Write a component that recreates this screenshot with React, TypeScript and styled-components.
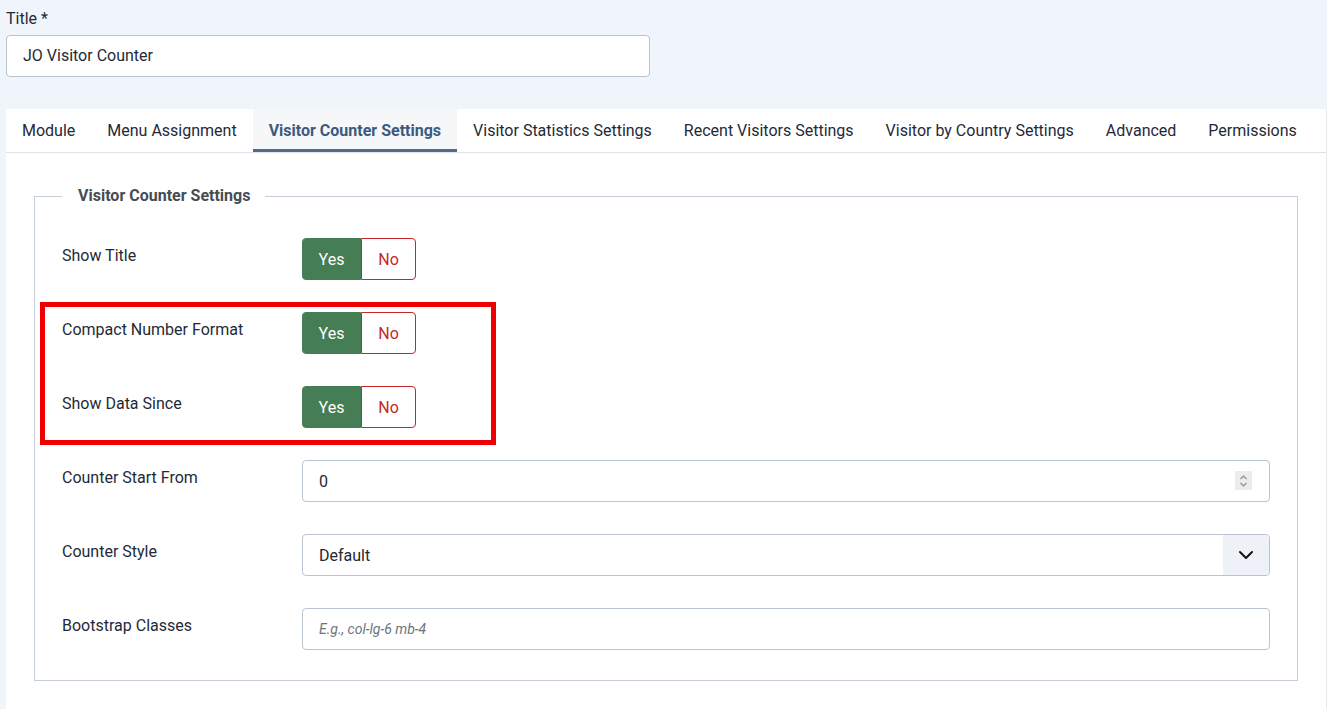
import React from "react";
import styled, { createGlobalStyle } from "styled-components";

const GlobalStyle = createGlobalStyle`
  body {
    margin: 0;
    background: #f0f4fb;
    font-family: Roboto, "Liberation Sans", sans-serif;
    font-size: 16px;
    color: #1f2a38;
  }
`;

const tabs = [
  "Module",
  "Menu Assignment",
  "Visitor Counter Settings",
  "Visitor Statistics Settings",
  "Recent Visitors Settings",
  "Visitor by Country Settings",
  "Advanced",
  "Permissions",
];

const Page = styled.div`
  padding: 9px 0 0 6px;
`;

const TopLabel = styled.label`
  display: block;
  line-height: 20px;
  margin-bottom: 6px;
  color: #1f2a38;
`;

const TextBox = styled.div<{ $width?: string; $lift?: boolean }>`
  box-sizing: border-box;
  width: ${(p) => p.$width || "100%"};
  height: 42px;
  border: 1px solid #b9c4cf;
  border-radius: 4px;
  background: #fff;
  display: flex;
  align-items: center;
  padding: 0 0 ${(p) => (p.$lift ? "1px" : "0")} 16px;
  color: #1f2a38;
  position: relative;
  overflow: hidden;
`;

const Panel = styled.div`
  margin-top: 32px;
  background: #fff;
  border-right: 1px solid #e6eaef;
  min-height: 620px;
`;

const TabBar = styled.div`
  display: flex;
  height: 43px;
  border-bottom: 1px solid #dfe3e8;
`;

const Tab = styled.div<{ $active?: boolean }>`
  padding: 0 16px;
  display: flex;
  align-items: center;
  white-space: nowrap;
  box-sizing: border-box;
  color: ${(p) => (p.$active ? "#3d5a7e" : "#1f2a38")};
  font-weight: ${(p) => (p.$active ? 700 : 400)};
  background: ${(p) => (p.$active ? "#f6f7f9" : "transparent")};
  border-bottom: 3px solid ${(p) => (p.$active ? "#4f6b8e" : "transparent")};
  padding-top: 2px;
`;

const Body = styled.div`
  padding: 31px 28px 20px 28px;
`;

const Fieldset = styled.fieldset`
  margin: 0;
  border: 1px solid #c6ced7;
  padding: 30px 27px 30px 27px;
`;

const Legend = styled.legend`
  padding: 0 15px 0 16px;
  font-weight: 700;
  color: #464c53;
  line-height: 24px;
`;

const Row = styled.div<{ $last?: boolean }>`
  display: flex;
  margin-bottom: ${(p) => (p.$last ? "0" : "32px")};
`;

const Label = styled.div`
  width: 240px;
  flex-shrink: 0;
  padding-top: 6px;
  line-height: 24px;
`;

const Control = styled.div`
  flex: 1;
`;

const Switcher = styled.div`
  display: inline-flex;
  height: 42px;
`;

const SwitchPart = styled.div<{ $on?: boolean }>`
  display: flex;
  align-items: center;
  justify-content: center;
  box-sizing: border-box;
  width: ${(p) => (p.$on ? "59px" : "55px")};
  background: ${(p) => (p.$on ? "#457d54" : "#fff")};
  color: ${(p) => (p.$on ? "#fff" : "#c52827")};
  border: 1px solid ${(p) => (p.$on ? "#457d54" : "#c52827")};
  border-radius: ${(p) => (p.$on ? "4px 0 0 4px" : "0 4px 4px 0")};
`;

const Group = styled.div`
  position: relative;
`;

const Highlight = styled.div`
  position: absolute;
  top: -10px;
  left: -22px;
  width: 456px;
  height: 143px;
  box-sizing: border-box;
  border: 5px solid #f00000;
  pointer-events: none;
`;

const Spinner = styled.div`
  position: absolute;
  right: 17px;
  top: 10px;
  width: 17px;
  height: 19px;
  background: #ececec;
  display: flex;
  align-items: center;
  justify-content: center;
`;

const SelectArrow = styled.div`
  position: absolute;
  right: 0;
  top: 0;
  bottom: 0;
  width: 46px;
  background: #eef2f8;
  display: flex;
  align-items: center;
  justify-content: center;
`;

const Placeholder = styled.span`
  font-style: italic;
  font-size: 14px;
  color: #6d757e;
`;

const YesNo = () => (
  <Switcher>
    <SwitchPart $on>Yes</SwitchPart>
    <SwitchPart>No</SwitchPart>
  </Switcher>
);

export default function App() {
  return (
    <Page>
      <GlobalStyle />
      <TopLabel>Title *</TopLabel>
      <TextBox $width="644px" $lift>
        JO Visitor Counter
      </TextBox>
      <Panel>
        <TabBar>
          {tabs.map((t) => (
            <Tab key={t} $active={t === "Visitor Counter Settings"}>
              {t}
            </Tab>
          ))}
        </TabBar>
        <Body>
          <Fieldset>
            <Legend>Visitor Counter Settings</Legend>
            <Row>
              <Label>Show Title</Label>
              <Control>
                <YesNo />
              </Control>
            </Row>
            <Group>
              <Row>
                <Label>Compact Number Format</Label>
                <Control>
                  <YesNo />
                </Control>
              </Row>
              <Row>
                <Label>Show Data Since</Label>
                <Control>
                  <YesNo />
                </Control>
              </Row>
              <Highlight />
            </Group>
            <Row>
              <Label>Counter Start From</Label>
              <Control>
                <TextBox>
                  0
                  <Spinner>
                    <svg width="9" height="14" viewBox="0 0 9 14" fill="none" stroke="#8a8f96" strokeWidth="1.2">
                      <path d="M1.5 5 L4.5 2 L7.5 5" />
                      <path d="M1.5 9 L4.5 12 L7.5 9" />
                    </svg>
                  </Spinner>
                </TextBox>
              </Control>
            </Row>
            <Row>
              <Label>Counter Style</Label>
              <Control>
                <TextBox>
                  Default
                  <SelectArrow>
                    <svg width="16" height="10" viewBox="0 0 16 10" fill="none" stroke="#111" strokeWidth="2" strokeLinecap="round" strokeLinejoin="round">
                      <path d="M2 2 L8 8 L14 2" />
                    </svg>
                  </SelectArrow>
                </TextBox>
              </Control>
            </Row>
            <Row $last>
              <Label>Bootstrap Classes</Label>
              <Control>
                <TextBox>
                  <Placeholder>E.g., col-lg-6 mb-4</Placeholder>
                </TextBox>
              </Control>
            </Row>
          </Fieldset>
        </Body>
      </Panel>
    </Page>
  );
}
